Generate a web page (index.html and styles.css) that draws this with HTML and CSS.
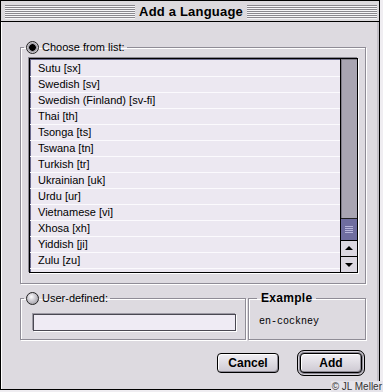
FILE: index.html
```html
<!DOCTYPE html>
<html lang="en">
<head>
<meta charset="UTF-8">
<title>Add a Language</title>
<link rel="stylesheet" href="styles.css">
</head>
<body>

<div class="window">
    <div class="titlebar">
        <span class="stripes"></span>
        <h1>Add a Language</h1>
        <span class="stripes"></span>
    </div>

    <div class="content">
        <fieldset class="group group-list">
            <legend><span class="radio on"></span>Choose from list:</legend>
            <div class="listbox">
                <ul class="items">
                    <li>Sutu [sx]</li>
                    <li>Swedish [sv]</li>
                    <li>Swedish (Finland) [sv-fi]</li>
                    <li>Thai [th]</li>
                    <li>Tsonga [ts]</li>
                    <li>Tswana [tn]</li>
                    <li>Turkish [tr]</li>
                    <li>Ukrainian [uk]</li>
                    <li>Urdu [ur]</li>
                    <li>Vietnamese [vi]</li>
                    <li>Xhosa [xh]</li>
                    <li>Yiddish [ji]</li>
                    <li>Zulu [zu]</li>
                </ul>
                <div class="scrollbar">
                    <div class="track"><div class="thumb"><i></i><i></i><i></i><i></i></div></div>
                    <div class="arrow up"></div>
                    <div class="arrow down"></div>
                </div>
            </div>
        </fieldset>

        <div class="row">
            <fieldset class="group group-user">
                <legend><span class="radio"></span>User-defined:</legend>
                <div class="field"></div>
            </fieldset>
            <fieldset class="group group-example">
                <legend>Example</legend>
                <div class="sample">en-cockney</div>
            </fieldset>
        </div>

        <div class="buttons">
            <button class="btn">Cancel</button>
            <span class="default-ring"><button class="btn">Add</button></span>
        </div>
    </div>
</div>

<div class="credit">© JL Meller</div>

</body>
</html>
```

FILE: styles.css
```css
body {
    margin: 0;
    background: #efedf1;
    font-family: "Liberation Sans", Arial, sans-serif;
    font-size: 11px;
    color: #000;
}
.window {
    position: relative;
    width: 380px;
    height: 390px;
    box-sizing: border-box;
    border: 1px solid #000;
    background: #dddae0;
    box-shadow: inset 1px 1px 0 #fff, inset -2px 0 0 #c4c1c8;
}
.titlebar {
    height: 20px;
    border-bottom: 1px solid #000;
    display: flex;
    align-items: center;
    gap: 4px;
    padding: 0 2px 0 4px;
    background: #dcdade;
}
.stripes {
    flex: 1;
    height: 14px;
    margin-top: 1px;
    background: repeating-linear-gradient(to bottom, #8a888e 0 1px, #f6f6f8 1px 2px);
}
h1 {
    margin: 0;
    font-size: 13px;
    font-weight: bold;
    letter-spacing: 0.2px;
}
.content {
    padding: 18px 13px 0 19px;
}
.group {
    margin: 0;
    border: 1px solid #8f8c96;
    box-shadow: 1px 1px 0 #fff, inset 1px 1px 0 #fff;
}
.group legend {
    display: flex;
    align-items: center;
    height: 14px;
    padding: 0 2px;
    margin-left: 0;
}
.radio {
    width: 11px;
    height: 11px;
    border: 1px solid #222;
    border-radius: 50%;
    margin-right: 3px;
    background: radial-gradient(circle at 40% 35%, #fff 0, #d4d2d8 35%, #8e8c94 100%);
}
.radio.on {
    background: radial-gradient(circle, #000 0 3px, #8a8890 3.5px, #c8c6cc 5px);
}
.group-list {
    padding: 0 7px 10px 3px;
}
.listbox {
    display: flex;
    height: 215px;
    margin: 4px 0 0 5px;
    box-sizing: border-box;
    border: 1px solid #000;
    box-shadow: inset 1px 1px 0 #6a6a8e, -1px -1px 0 #8a8892, 1px 1px 0 #fff;
    background: #ece8f1;
}
.items {
    flex: 1;
    list-style: none;
    margin: 0;
    padding: 2px 0 0 0;
}
.items li {
    height: 15px;
    line-height: 15px;
    padding-left: 8px;
    border-bottom: 1px solid #fbfafd;
}
.scrollbar {
    width: 16px;
    display: flex;
    flex-direction: column;
    border-left: 1px solid #000;
}
.track {
    flex: 1;
    display: flex;
    flex-direction: column;
    justify-content: flex-end;
    background: #a9a5b2;
    box-shadow: inset 1px 1px 0 #7f7c88;
}
.thumb {
    height: 21px;
    border-top: 1px solid #222;
    background: #6f6da0;
    display: flex;
    flex-direction: column;
    justify-content: center;
    align-items: center;
    gap: 1px;
}
.thumb i {
    width: 8px;
    height: 1px;
    background: #b8b6dc;
}
.arrow {
    height: 15px;
    border-top: 1px solid #000;
    background: #dcd8e2;
    position: relative;
}
.arrow::after {
    content: "";
    position: absolute;
    left: 4px;
    top: 5px;
    border-left: 4px solid transparent;
    border-right: 4px solid transparent;
}
.arrow.up::after {
    border-bottom: 4px solid #000;
}
.arrow.down::after {
    border-top: 4px solid #000;
    top: 6px;
}
.row {
    display: flex;
    gap: 2px;
    margin-top: 7px;
}
.group-user {
    width: 212px;
    padding: 0 9px 8px 3px;
}
.field {
    height: 15px;
    margin: 9px 0 0 9px;
    border: 1px solid #4a4852;
    background: #efebf4;
    box-shadow: -1px -1px 0 #9d9aa4, 1px 1px 0 #fff;
}
.group-example {
    flex: 1;
    padding: 0 4px 8px 3px;
}
.group-example legend {
    font-size: 12px;
    font-weight: bold;
    padding: 0 4px;
    margin-left: 5px;
    letter-spacing: 0.3px;
}
.sample {
    margin: 9px 0 0 7px;
    font-family: "Liberation Mono", monospace;
    font-size: 10px;
    line-height: 15px;
}
.buttons {
    display: flex;
    justify-content: flex-end;
    align-items: center;
    gap: 18px;
    margin: 10px 1px 0 0;
}
.btn {
    width: 62px;
    height: 20px;
    padding: 0;
    border: 1px solid #000;
    border-radius: 4px;
    background: linear-gradient(#f0eef3, #cdc9d2);
    box-shadow: inset 1px 1px 0 #fff, inset -1px -1px 0 #8e8b96;
    font-family: "Liberation Sans", Arial, sans-serif;
    font-size: 12px;
    font-weight: bold;
    color: #000;
}
.default-ring {
    display: flex;
    padding: 2px;
    border: 1px solid #000;
    border-radius: 7px;
    background: #8a8792;
    box-shadow: inset 0 0 0 1px #d6d3da;
}
.credit {
    position: absolute;
    right: 0;
    bottom: 0;
    padding: 0 1px;
    font-size: 10px;
    line-height: 11px;
    color: #333;
    background: #e6e4ea;
}
```
